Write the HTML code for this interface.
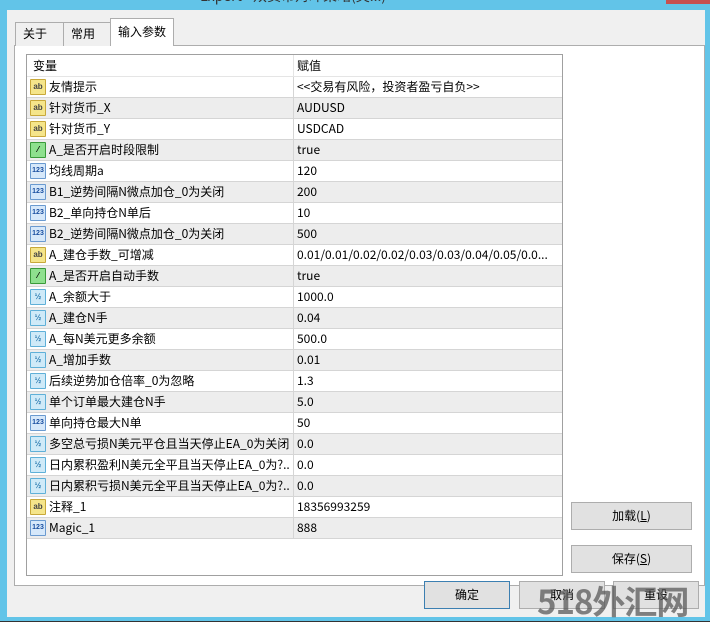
<!DOCTYPE html>
<html><head><meta charset="utf-8"><style>
*{margin:0;padding:0;box-sizing:border-box}
body{width:710px;height:628px;overflow:hidden;background:#62c4e8;font-family:"Noto Sans CJK SC","Liberation Sans",sans-serif;font-size:12px;color:#000;position:relative}
.abs{position:absolute}
#title{left:200px;top:-14px;font-size:14px;color:#333;white-space:nowrap}
#body{left:7px;top:10px;width:698px;height:607px;background:#f0f0f0}
#task{left:0;top:621px;width:710px;height:7px;background:#fff;border-top:1px solid #333}
.tab{position:absolute;top:22px;height:24px;border:1px solid #adadad;border-bottom:none;background:#f0f0f0;padding-left:7px;line-height:22px}
#panel{left:14px;top:45px;width:691px;height:541px;background:#fff;border:1px solid #adadad}
#grid{left:26px;top:54px;width:537px;height:522px;border:1px solid #a0a0a0;background:#fff;overflow:hidden}
.row{position:absolute;left:0;width:535px;height:21px;border-bottom:1px solid #d5d5d5;line-height:20px}
.row.g{background:#ededed}
.c1{position:absolute;left:22px;top:0;white-space:nowrap}
.c2{position:absolute;left:270px;top:0;white-space:nowrap}
.sep{position:absolute;left:266px;top:0;width:1px;height:100%;background:#d5d5d5}
.ic{position:absolute;left:3px;top:2px;width:16px;height:16px;border-radius:1px;font-family:"Liberation Sans",sans-serif;font-size:8px;font-weight:bold;line-height:14px;text-align:center}
.ab{background:#f5e58a;border:1px solid #c8a83a;color:#444}
.gr{background:#8ee08e;border:1px solid #3a9a3a}
.n{background:#d6e8fa;border:1px solid #6a9ad0;color:#1a4fa0;font-size:7px}
.v{background:#cfeaf8;border:1px solid #5fb0d8;color:#2a7ab0;font-size:8px}
.btn{position:absolute;height:28px;background:#e1e1e1;border:1px solid #adadad;text-align:center;line-height:26px}
</style></head><body>
<div class="abs" id="title">Expert - 双货币对冲策略(英...)</div>
<div class="abs" style="left:666px;top:0;width:44px;height:4px;background:#c75050"></div>
<div class="abs" id="body"></div>
<div class="abs" id="task"></div>
<div class="abs" id="panel"></div>
<div class="tab" style="left:15px;width:49px">关于</div>
<div class="tab" style="left:63px;width:48px">常用</div>
<div class="tab" style="left:110px;width:64px;top:18px;height:28px;background:#fff;line-height:26px">输入参数</div>
<div class="abs" id="grid">
<div class="row" style="top:0;height:22px;border-bottom:1px solid #e5e5e5;line-height:22px"><span class="c1" style="left:6px">变量</span><span class="c2">赋值</span><div class="sep" style="background:#e5e5e5"></div></div>
<div id="rows"></div>
</div>
<div class="btn" style="left:571px;top:502px;width:121px">加载(<u>L</u>)</div>
<div class="btn" style="left:571px;top:545px;width:121px">保存(<u>S</u>)</div>
<div class="btn" style="left:424px;top:581px;width:86px;border-color:#3c7fb1">确定</div>
<div class="btn" style="left:519px;top:581px;width:86px">取消</div>
<div class="btn" style="left:613px;top:581px;width:86px">重设</div>
<div class="abs" style="left:537px;top:578px;font-size:33px;line-height:44px;font-weight:bold;color:rgba(90,90,90,0.75);white-space:nowrap;letter-spacing:-1px">518外汇网</div>
<script>
var d=[["ab","友情提示","<<交易有风险，投资者盈亏自负>>"],["ab","针对货币_X","AUDUSD"],["ab","针对货币_Y","USDCAD"],["gr","A_是否开启时段限制","true"],["n","均线周期a","120"],["n","B1_逆势间隔N微点加仓_0为关闭","200"],["n","B2_单向持仓N单后","10"],["n","B2_逆势间隔N微点加仓_0为关闭","500"],["ab","A_建仓手数_可增减","0.01/0.01/0.02/0.02/0.03/0.03/0.04/0.05/0.0..."],["gr","A_是否开启自动手数","true"],["v","A_余额大于","1000.0"],["v","A_建仓N手","0.04"],["v","A_每N美元更多余额","500.0"],["v","A_增加手数","0.01"],["v","后续逆势加仓倍率_0为忽略","1.3"],["v","单个订单最大建仓N手","5.0"],["n","单向持仓最大N单","50"],["v","多空总亏损N美元平仓且当天停止EA_0为关闭","0.0"],["v","日内累积盈利N美元全平且当天停止EA_0为?..","0.0"],["v","日内累积亏损N美元全平且当天停止EA_0为?..","0.0"],["ab","注释_1","18356993259"],["n","Magic_1","888"]];
var h="";d.forEach(function(r,i){var t={ab:"ab",gr:"⁄",n:"123",v:"½"}[r[0]];
h+='<div class="row'+(i%2?' g':'')+'" style="top:'+(22+i*21)+'px"><div class="ic '+r[0]+'">'+t+'</div><span class="c1">'+r[1].replace(/</g,"&lt;").replace(/>/g,"&gt;")+'</span><div class="sep"></div><span class="c2">'+r[2].replace(/</g,"&lt;").replace(/>/g,"&gt;")+'</span></div>';});
document.getElementById("rows").innerHTML=h;
</script>
</body></html>
